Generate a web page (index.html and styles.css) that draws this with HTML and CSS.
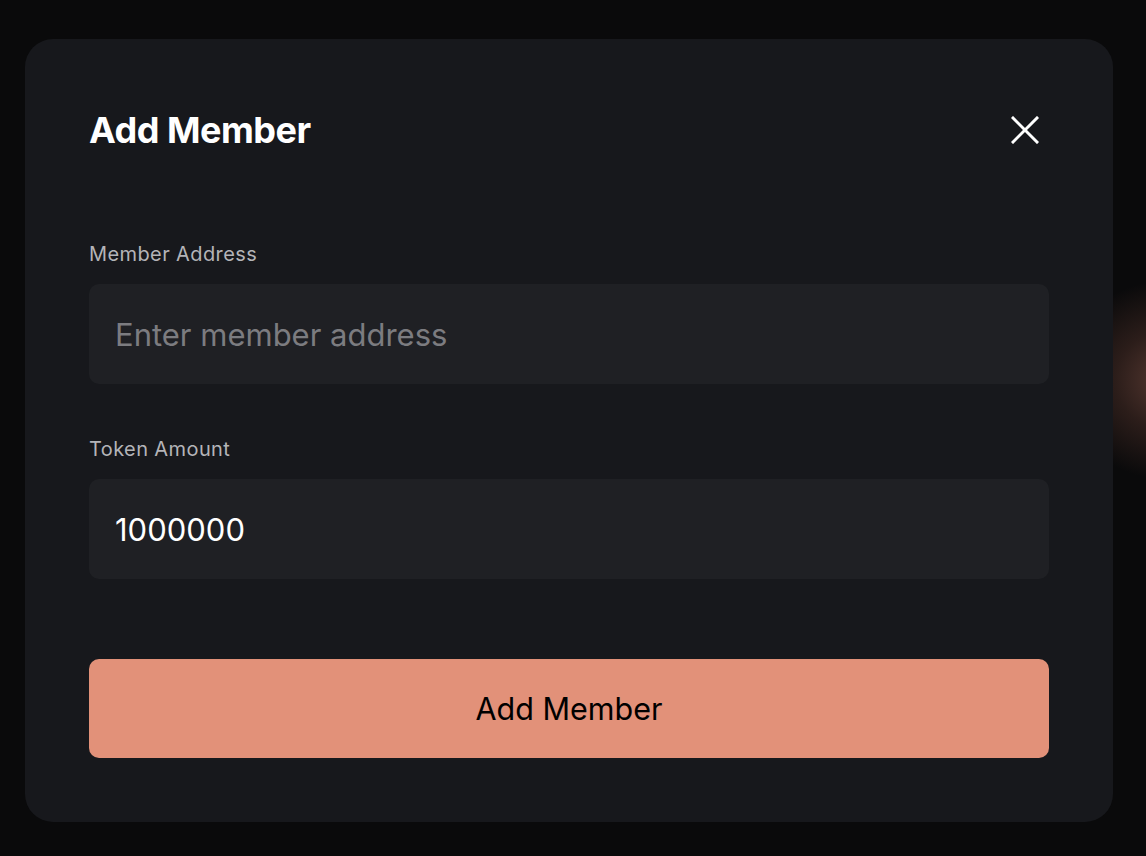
FILE: index.html
```html
<!DOCTYPE html>
<html lang="en">
<head>
<meta charset="utf-8">
<title>Add Member</title>
<link rel="stylesheet" href="styles.css">
</head>
<body>
<div class="page">
  <div class="glow"></div>
  <div class="modal">
    <div class="modal-header">
      <h2 class="modal-title">Add Member</h2>
      <button class="close-btn" type="button" aria-label="Close">
        <svg width="28" height="28" viewBox="0 0 28 28" fill="none" stroke="#ffffff" stroke-width="3" stroke-linecap="square">
          <line x1="2" y1="2" x2="26" y2="26"/>
          <line x1="26" y1="2" x2="2" y2="26"/>
        </svg>
      </button>
    </div>
    <form class="form">
      <div class="field">
        <label class="label" for="addr">Member Address</label>
        <input class="input" id="addr" type="text" placeholder="Enter member address">
      </div>
      <div class="field field-second">
        <label class="label" for="amt">Token Amount</label>
        <input class="input" id="amt" type="text" value="1000000">
      </div>
      <button class="submit" type="button">Add Member</button>
    </form>
  </div>
</div>
</body>
</html>
```

FILE: styles.css
```css
* { box-sizing: border-box; }

html, body {
  margin: 0;
  padding: 0;
  height: 100%;
}

body {
  background: #0a0a0b;
  font-family: Inter, "Noto Sans", "Liberation Sans", sans-serif;
  overflow: hidden;
}

.page {
  position: relative;
  width: 1146px;
  height: 856px;
  padding: 39px 0 0 25px;
  overflow: hidden;
}

.glow {
  position: absolute;
  left: 1060px;
  top: 280px;
  width: 220px;
  height: 200px;
  border-radius: 50%;
  background: radial-gradient(closest-side, rgba(92, 60, 52, 0.95), rgba(66, 42, 36, 0.6) 50%, rgba(20, 14, 13, 0) 100%);
}

.modal {
  position: relative;
  width: 1088px;
  background: #17181c;
  border-radius: 28px;
  padding: 64px;
}

.modal-header {
  display: flex;
  align-items: center;
  justify-content: space-between;
  height: 54px;
}

.modal-title {
  margin: 0;
  font-size: 36px;
  line-height: 54px;
  font-weight: 700;
  color: #ffffff;
  letter-spacing: -0.5px;
}

.close-btn {
  width: 48px;
  height: 48px;
  display: flex;
  align-items: center;
  justify-content: center;
  padding: 0;
  border: 0;
  background: transparent;
  cursor: pointer;
}

.form {
  display: flex;
  flex-direction: column;
  margin-top: 83px;
}

.field {
  display: flex;
  flex-direction: column;
  gap: 16px;
}

.field-second {
  margin-top: 51px;
}

.label {
  font-size: 20px;
  line-height: 28px;
  color: #b4b4b8;
  letter-spacing: 0.4px;
}

.input {
  height: 100px;
  width: 100%;
  border: 0;
  outline: none;
  border-radius: 10px;
  background: #1f2024;
  padding: 0 26px;
  font-family: inherit;
  font-size: 31px;
  color: #ffffff;
}

.input::placeholder {
  color: #7c7c80;
}

.submit {
  margin-top: 80px;
  height: 99px;
  width: 100%;
  border: 0;
  border-radius: 10px;
  background: #e29179;
  color: #000000;
  font-family: inherit;
  font-size: 30.5px;
  font-weight: 400;
  cursor: pointer;
}
```
